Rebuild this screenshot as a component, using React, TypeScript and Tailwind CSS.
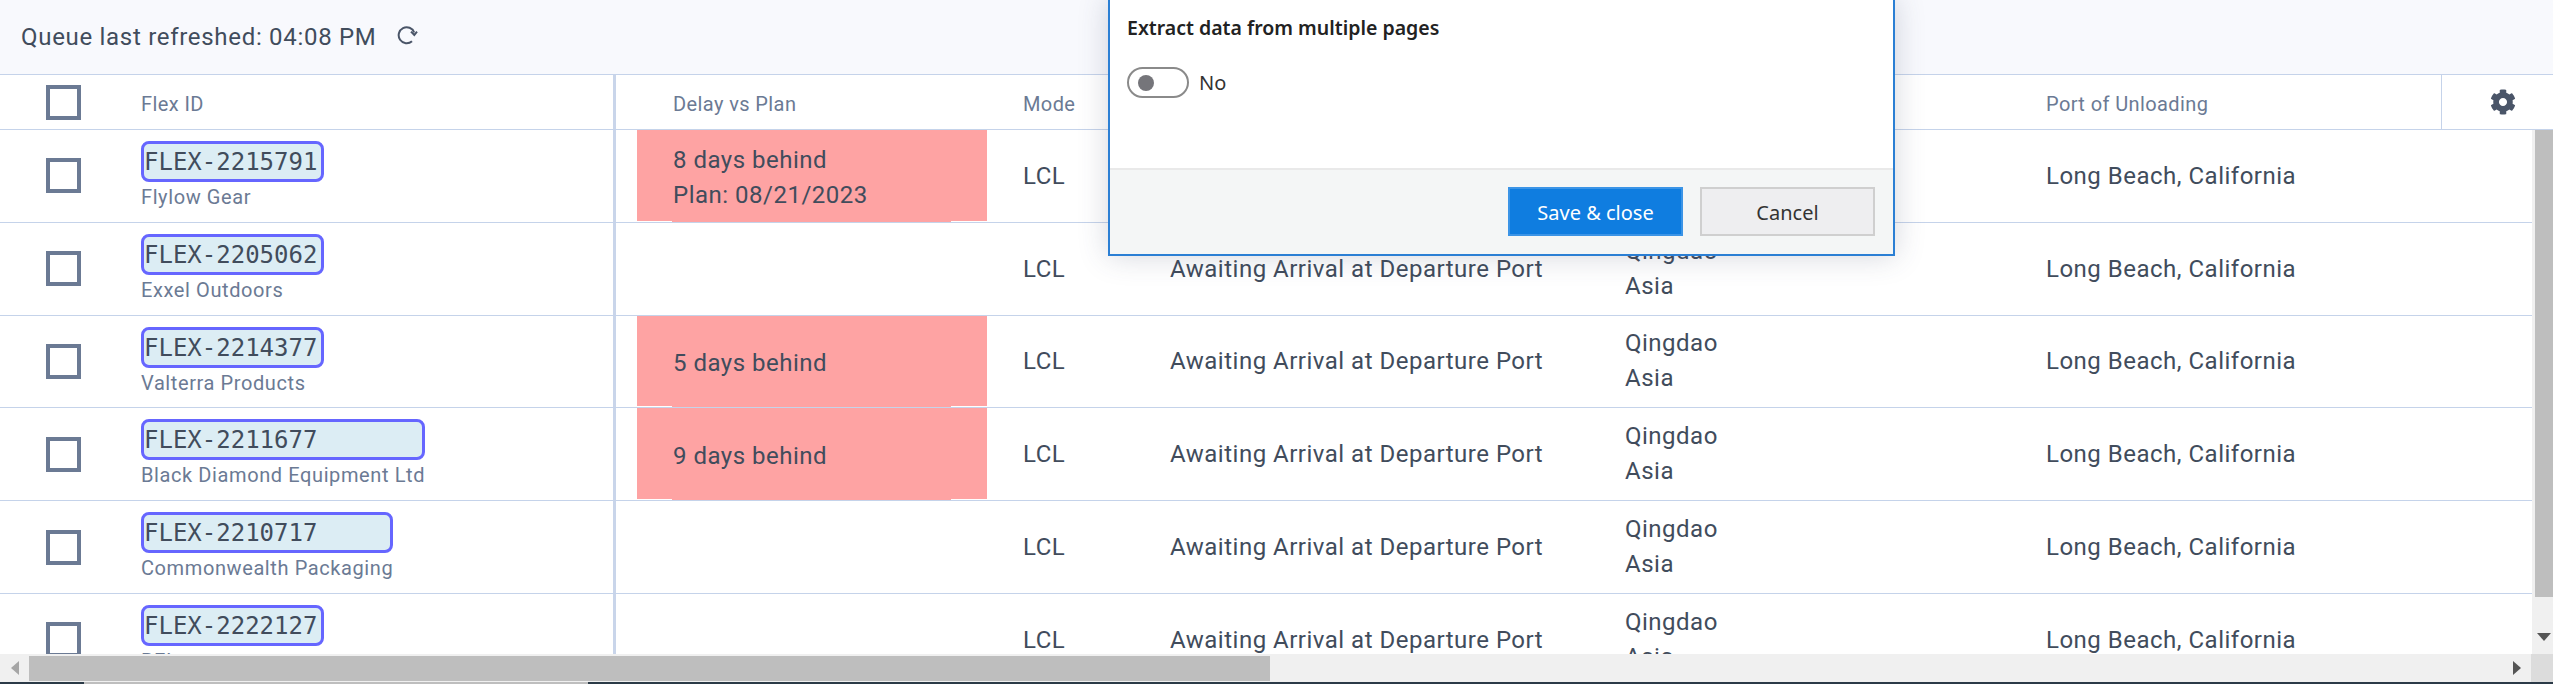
import { FaCog } from "react-icons/fa";

type Shipment = {
  id: string;
  company: string;
  delay?: string;
  plan?: string;
};

const shipments: Shipment[] = [
  { id: "FLEX-2215791", company: "Flylow Gear", delay: "8 days behind", plan: "Plan: 08/21/2023" },
  { id: "FLEX-2205062", company: "Exxel Outdoors" },
  { id: "FLEX-2214377", company: "Valterra Products", delay: "5 days behind" },
  { id: "FLEX-2211677", company: "Black Diamond Equipment Ltd", delay: "9 days behind" },
  { id: "FLEX-2210717", company: "Commonwealth Packaging" },
  { id: "FLEX-2222127", company: "REI" },
];

const columns = "grid grid-cols-[141px_475px_407px_147px_455px_421px_1fr]";

function Checkbox() {
  return <div className="h-[35px] w-[35px] border-[4px] border-[#6b7a94]" />;
}

function RefreshIcon() {
  return (
    <svg
      width="21"
      height="20"
      viewBox="0 0 21 20"
      fill="none"
      stroke="#4a5568"
      strokeWidth="2"
      className="mb-[5px] ml-[20px]"
    >
      <path d="M15 16.2A8 8 0 1 1 17.2 7.5" />
      <path d="M14 6.6L17.3 10L20 6.6" />
    </svg>
  );
}

function Row({ shipment }: { shipment: Shipment }) {
  return (
    <div className={`${columns} h-[92.8px] shrink-0 border-b border-[#c5d3ea] text-[24px] tracking-[0.5px] text-[#414c5c]`}>
      <div className="flex items-center pl-[46px]">
        <Checkbox />
      </div>
      <div className="flex flex-col justify-start border-r-[3px] border-[#c9d5ea] pt-[11px]">
        <div className="flex w-fit flex-col">
          <div className="h-[41px] min-w-[183px] rounded-lg border-[3px] border-[#6666ff] bg-[#dcedf4] font-['DejaVu_Sans_Mono',monospace] text-[24px] leading-[37px] tracking-normal">
            {shipment.id}
          </div>
          <div className="mt-[1px] text-[20px] leading-[28px] tracking-[0.6px] text-[#6b7a94]">{shipment.company}</div>
        </div>
      </div>
      <div className="pl-[21px]">
        {shipment.delay && (
          <div className="flex h-full flex-col">
            <div className="flex w-[350px] flex-1 flex-col justify-center bg-[#fea3a3] pl-[36px] pt-[5px] leading-[35px]">
              <div>{shipment.delay}</div>
              {shipment.plan && <div>{shipment.plan}</div>}
            </div>
            <div className="ml-[35px] h-px w-[279px] bg-[#fea3a3]" />
          </div>
        )}
      </div>
      <div className="flex items-center">LCL</div>
      <div className="flex items-center">Awaiting Arrival at Departure Port</div>
      <div className="flex flex-col justify-center leading-[35px]">
        <div>Qingdao</div>
        <div>Asia</div>
      </div>
      <div className="flex items-center">Long Beach, California</div>
    </div>
  );
}

function SaveDialog() {
  return (
    <div className="absolute left-[1108px] top-[-2px] z-10 flex h-[258px] w-[787px] flex-col border-2 border-[#2b7fd4] bg-white font-['Noto_Sans',sans-serif] shadow-[0_0_28px_rgba(60,70,100,0.22)]">
      <div className="flex-1 px-[17px]">
        <div className="pt-[16px] text-[19.5px] font-semibold leading-[24px] text-[#222]">
          Extract data from multiple pages
        </div>
        <div className="mt-[27px] flex items-center gap-[10px]">
          <div className="flex h-[31px] w-[62px] items-center rounded-full border-2 border-[#8a8a8a] pl-[9px]">
            <div className="h-[16px] w-[16px] rounded-full bg-[#75757a]" />
          </div>
          <span className="text-[20px] text-[#333]">No</span>
        </div>
      </div>
      <div className="flex h-[86px] justify-end gap-[17px] border-t-2 border-[#e9e9e9] bg-[#f4f6f6] pr-[18px] pt-[17px]">
        <button className="h-[49px] w-[175px] border-2 border-[#3b94e6] bg-[#0f7de0] pt-[2px] text-[20px] text-white">
          Save &amp; close
        </button>
        <button className="h-[49px] w-[175px] border-2 border-[#cfcfcf] bg-[#eeeef0] pt-[2px] text-[20px] text-[#333]">
          Cancel
        </button>
      </div>
    </div>
  );
}

export default function App() {
  return (
    <div className="relative flex h-[684px] w-[2553px] flex-col overflow-hidden bg-white font-['Roboto',sans-serif]">
      <div className="flex h-[75px] shrink-0 items-center border-b border-[#c5d3ea] bg-[#f8f9fd] pl-[21px] text-[24px] tracking-[0.7px] text-[#414c5c]">
        <span>Queue last refreshed: 04:08 PM</span>
        <RefreshIcon />
      </div>

      <div className={`${columns} h-[55px] shrink-0 border-b border-[#c5d3ea] pt-[3px] text-[20px] tracking-[0.4px] text-[#6b7a94]`}>
        <div className="-mt-[3px] flex items-center pl-[46px]">
          <Checkbox />
        </div>
        <div className="-mt-[3px] flex items-center border-r-[3px] border-[#c9d5ea] pt-[3px]">Flex ID</div>
        <div className="flex items-center pl-[57px]">Delay vs Plan</div>
        <div className="flex items-center">Mode</div>
        <div />
        <div />
        <div className="-mt-[3px] flex items-center justify-between pt-[3px]">
          <span>Port of Unloading</span>
          <div className="-mt-[3px] flex h-[54px] w-[112px] items-center justify-center border-l border-[#c5d3ea] pl-[10px]">
            <FaCog size={26} className="text-[#4a5568]" />
          </div>
        </div>
      </div>

      <div className="flex min-h-0 flex-1">
        <div className="min-w-0 flex-1 overflow-hidden">
          {shipments.map((s) => (
            <Row key={s.id} shipment={s} />
          ))}
        </div>
        <div className="flex w-[21px] shrink-0 flex-col items-center bg-[#f0f0f0] pl-[3px]">
          <div className="h-[467px] w-full bg-[#bebebe]" />
          <div className="mt-[36px] h-0 w-0 border-x-[7px] border-t-[8px] border-x-transparent border-t-[#555]" />
        </div>
      </div>

      <div className="flex h-[28px] shrink-0 items-center bg-[#f0f0f0]">
        <div className="flex w-[29px] justify-center">
          <div className="h-0 w-0 border-y-[7px] border-r-[8px] border-y-transparent border-r-[#a6a6a6]" />
        </div>
        <div className="h-[25px] w-[1241px] bg-[#bebebe]" />
        <div className="flex flex-1 justify-end pr-[10px]">
          <div className="h-0 w-0 border-y-[7px] border-l-[8px] border-y-transparent border-l-[#555]" />
        </div>
        <div className="h-full w-[22px] bg-[#dcdcdc]" />
      </div>
      <div className="flex h-[2px] shrink-0 bg-[#2b3a47]">
        <div className="ml-[84px] h-full w-[504px] bg-[#bebebe]" />
      </div>

      <SaveDialog />
    </div>
  );
}
